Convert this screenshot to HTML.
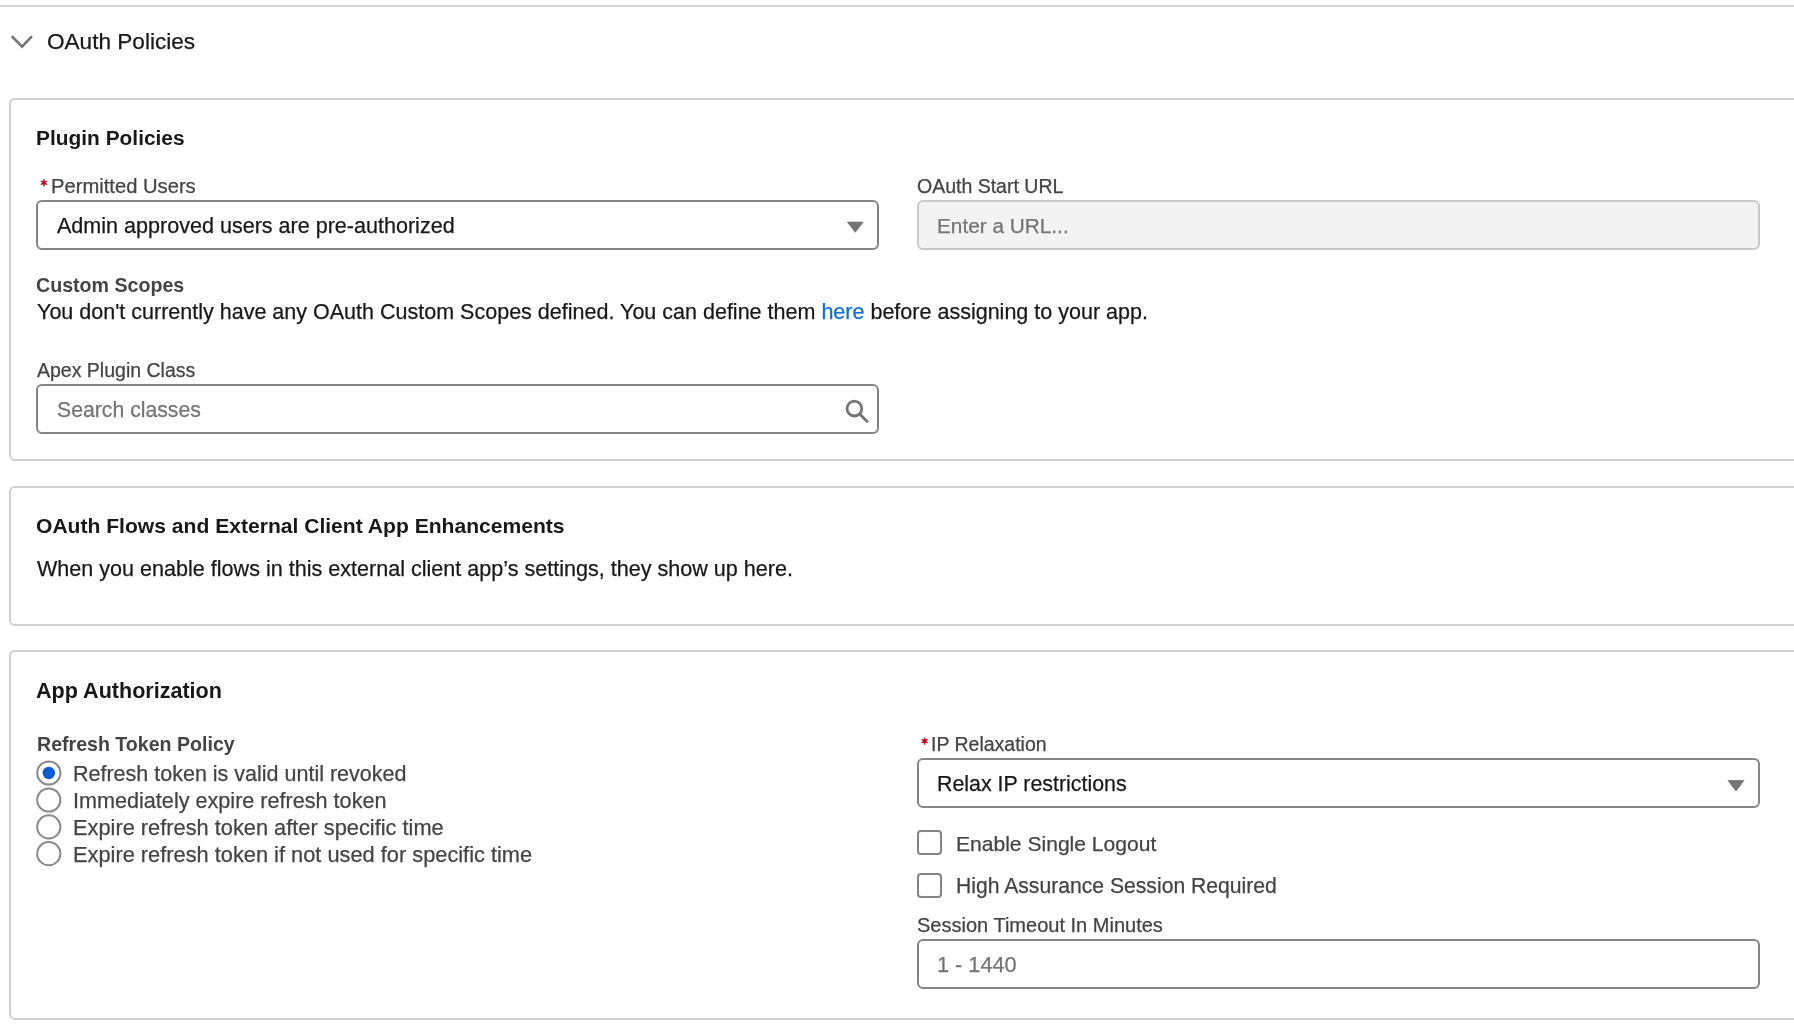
<!DOCTYPE html>
<html><head><meta charset="utf-8"><title>OAuth Policies</title>
<style>
html,body{margin:0;padding:0;background:#fff;}
body{width:1794px;height:1030px;overflow:hidden;position:relative;font-family:"Liberation Sans", sans-serif;}
.t{position:absolute;white-space:nowrap;will-change:transform;}
.r{-webkit-text-stroke:0.25px currentColor;}
.b{position:absolute;}
</style></head><body>
<div class="b" style="left:0;top:5px;width:1794px;height:2px;background:#d4d4d4"></div>
<div class="b" style="left:9px;top:98px;width:1900px;height:363px;border:2px solid #d0d0d0;border-radius:6px;box-sizing:border-box"></div>
<div class="b" style="left:9px;top:486px;width:1900px;height:140px;border:2px solid #d0d0d0;border-radius:6px;box-sizing:border-box"></div>
<div class="b" style="left:9px;top:650px;width:1900px;height:370px;border:2px solid #d0d0d0;border-radius:6px;box-sizing:border-box"></div>
<div class="b" style="left:36px;top:200px;width:843px;height:50px;border:2px solid #858585;border-radius:6px;box-sizing:border-box;background:#fff"></div>
<div class="b" style="left:917px;top:200px;width:843px;height:50px;border:2px solid #c9c9c9;border-radius:6px;box-sizing:border-box;background:#f3f3f3"></div>
<div class="b" style="left:36px;top:384px;width:843px;height:50px;border:2px solid #858585;border-radius:6px;box-sizing:border-box;background:#fff"></div>
<div class="b" style="left:917px;top:758px;width:843px;height:50px;border:2px solid #858585;border-radius:6px;box-sizing:border-box;background:#fff"></div>
<div class="b" style="left:917px;top:939px;width:843px;height:50px;border:2px solid #858585;border-radius:6px;box-sizing:border-box;background:#fff"></div>
<div class="b" style="left:917px;top:830px;width:25px;height:25px;border:2px solid #858585;border-radius:4px;box-sizing:border-box"></div>
<div class="b" style="left:917px;top:873px;width:25px;height:25px;border:2px solid #858585;border-radius:4px;box-sizing:border-box"></div>
<svg class="b" style="left:0;top:0" width="1794" height="1030" viewBox="0 0 1794 1030">
<polyline points="11.7,36.1 22.1,46.6 32,36.1" fill="none" stroke="#747474" stroke-width="2.6"/>
<path d="M847.4,222.1 L863.2,222.1 L855.3,232.3 Z" fill="#747474" stroke="#747474" stroke-width="0.8" stroke-linejoin="round"/>
<path d="M1728,780.4 L1744,780.4 L1736,791 Z" fill="#747474" stroke="#747474" stroke-width="0.8" stroke-linejoin="round"/>
<circle cx="854.4" cy="408.6" r="7.4" fill="none" stroke="#747474" stroke-width="2.8"/>
<line x1="860.2" y1="414.4" x2="867.2" y2="421.4" stroke="#747474" stroke-width="2.8" stroke-linecap="round"/>
<circle cx="48.8" cy="773" r="11.6" fill="#fff" stroke="#8a8a8a" stroke-width="2"/>
<circle cx="48.8" cy="773" r="6.2" fill="#0b5cd5"/>
<circle cx="48.8" cy="800" r="11.6" fill="#fff" stroke="#8a8a8a" stroke-width="2"/>
<circle cx="48.8" cy="826.9" r="11.6" fill="#fff" stroke="#8a8a8a" stroke-width="2"/>
<circle cx="48.8" cy="853.7" r="11.6" fill="#fff" stroke="#8a8a8a" stroke-width="2"/>
<polygon points="43.90,179.00 44.65,181.40 47.10,180.85 45.40,182.70 47.10,184.55 44.65,184.00 43.90,186.40 43.15,184.00 40.70,184.55 42.40,182.70 40.70,180.85 43.15,181.40" fill="#ba0517" stroke="#ba0517" stroke-width="0.6" stroke-linejoin="round"/>
<polygon points="924.65,737.40 925.40,739.80 927.85,739.25 926.15,741.10 927.85,742.95 925.40,742.40 924.65,744.80 923.90,742.40 921.45,742.95 923.15,741.10 921.45,739.25 923.90,739.80" fill="#ba0517" stroke="#ba0517" stroke-width="0.6" stroke-linejoin="round"/>
</svg>
<div class="t r" style="left:47.00px;top:25.00px;font-size:22.58px;line-height:34px;font-weight:400;color:#181818">OAuth Policies</div>
<div class="t" style="left:36.00px;top:122.00px;font-size:20.90px;line-height:31px;font-weight:700;color:#181818">Plugin Policies</div>
<div class="t r" style="left:51.00px;top:171.00px;font-size:20.20px;line-height:30px;font-weight:400;color:#444444">Permitted Users</div>
<div class="t r" style="left:57.00px;top:210.00px;font-size:21.55px;line-height:32px;font-weight:400;color:#181818">Admin approved users are pre-authorized</div>
<div class="t r" style="left:917.00px;top:172.00px;font-size:19.51px;line-height:29px;font-weight:400;color:#444444">OAuth Start URL</div>
<div class="t r" style="left:937.00px;top:210.00px;font-size:20.79px;line-height:31px;font-weight:400;color:#747474">Enter a URL...</div>
<div class="t" style="left:36.00px;top:271.00px;font-size:19.63px;line-height:29px;font-weight:700;color:#444444">Custom Scopes</div>
<div class="t r" style="left:37.00px;top:296.00px;font-size:21.52px;line-height:32px;font-weight:400;color:#181818">You don't currently have any OAuth Custom Scopes defined. You can define them <span style="color:#0a6fd6">here</span> before assigning to your app.</div>
<div class="t r" style="left:37.00px;top:356.00px;font-size:19.50px;line-height:29px;font-weight:400;color:#444444">Apex Plugin Class</div>
<div class="t r" style="left:57.00px;top:394.00px;font-size:21.22px;line-height:32px;font-weight:400;color:#747474">Search classes</div>
<div class="t" style="left:36.00px;top:510.00px;font-size:21.09px;line-height:32px;font-weight:700;color:#181818">OAuth Flows and External Client App Enhancements</div>
<div class="t r" style="left:37.00px;top:553.00px;font-size:21.57px;line-height:32px;font-weight:400;color:#181818">When you enable flows in this external client app’s settings, they show up here.</div>
<div class="t" style="left:36.00px;top:675.00px;font-size:21.56px;line-height:32px;font-weight:700;color:#181818">App Authorization</div>
<div class="t" style="left:37.00px;top:730.00px;font-size:19.58px;line-height:29px;font-weight:700;color:#444444">Refresh Token Policy</div>
<div class="t r" style="left:73.00px;top:758.00px;font-size:21.50px;line-height:32px;font-weight:400;color:#444444">Refresh token is valid until revoked</div>
<div class="t r" style="left:73.00px;top:785.00px;font-size:21.62px;line-height:32px;font-weight:400;color:#444444">Immediately expire refresh token</div>
<div class="t r" style="left:73.00px;top:811.00px;font-size:21.81px;line-height:33px;font-weight:400;color:#444444">Expire refresh token after specific time</div>
<div class="t r" style="left:73.00px;top:838.00px;font-size:21.81px;line-height:33px;font-weight:400;color:#444444">Expire refresh token if not used for specific time</div>
<div class="t r" style="left:931.00px;top:730.00px;font-size:19.51px;line-height:29px;font-weight:400;color:#444444">IP Relaxation</div>
<div class="t r" style="left:937.00px;top:768.00px;font-size:21.39px;line-height:32px;font-weight:400;color:#181818">Relax IP restrictions</div>
<div class="t r" style="left:956.00px;top:828.00px;font-size:21.07px;line-height:32px;font-weight:400;color:#444444">Enable Single Logout</div>
<div class="t r" style="left:956.00px;top:870.00px;font-size:21.15px;line-height:32px;font-weight:400;color:#444444">High Assurance Session Required</div>
<div class="t r" style="left:917.00px;top:910.00px;font-size:20.03px;line-height:30px;font-weight:400;color:#444444">Session Timeout In Minutes</div>
<div class="t r" style="left:937.00px;top:948.00px;font-size:21.70px;line-height:33px;font-weight:400;color:#747474">1 - 1440</div>
</body></html>
